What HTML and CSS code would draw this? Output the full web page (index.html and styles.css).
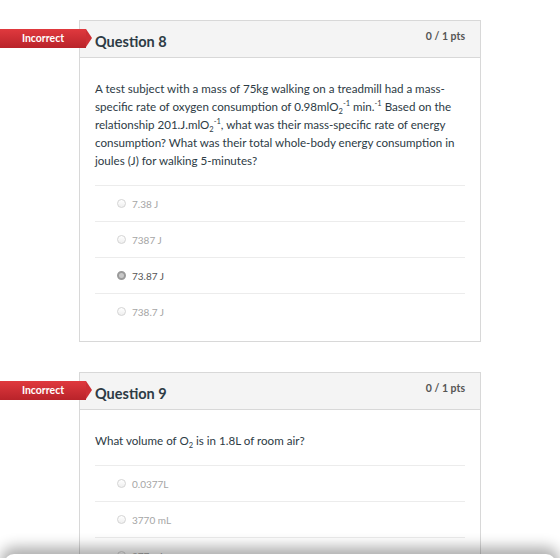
FILE: index.html
```html
<!DOCTYPE html>
<html>
<head>
    <title>Quiz Results</title>
    <link rel="stylesheet" href="styles.css">
</head>
<body>
    <div class="quiz">

        <div class="question">
            <div class="badge">Incorrect</div>
            <div class="question-header">
                <h2 class="question-title">Question 8</h2>
                <span class="points">0 / 1 pts</span>
            </div>
            <div class="question-body">
                <p class="question-text">A test subject with a mass of 75kg walking on a treadmill had a mass-specific rate of oxygen consumption of 0.98mlO<sub>2</sub><sup>-1</sup> min.<sup>-1</sup> Based on the relationship 201.J.mlO<sub>2</sub><sup>-1</sup>, what was their mass-specific rate of energy consumption? What was their total whole-body energy consumption in joules (J) for walking 5-minutes?</p>
                <div class="answers">
                    <div class="answer"><span class="radio"></span>7.38 J</div>
                    <div class="answer"><span class="radio"></span>7387 J</div>
                    <div class="answer selected"><span class="radio"></span>73.87 J</div>
                    <div class="answer"><span class="radio"></span>738.7 J</div>
                </div>
            </div>
        </div>

        <div class="question">
            <div class="badge">Incorrect</div>
            <div class="question-header">
                <h2 class="question-title">Question 9</h2>
                <span class="points">0 / 1 pts</span>
            </div>
            <div class="question-body">
                <p class="question-text">What volume of O<sub>2</sub> is in 1.8L of room air?</p>
                <div class="answers">
                    <div class="answer"><span class="radio"></span>0.0377L</div>
                    <div class="answer"><span class="radio"></span>3770 mL</div>
                    <div class="answer"><span class="radio"></span>377 mL</div>
                </div>
            </div>
        </div>

    </div>

    <!-- panel sliding in over the bottom of the page -->
    <div class="bottom-panel"></div>
</body>
</html>
```

FILE: styles.css
```css
body {
    background-color: #ffffff;
    font-family: Lato, "Open Sans", sans-serif;
    color: #2d3b45;
    margin: 0;
    padding: 0;
    overflow: hidden;
}

.quiz {
    padding-top: 20px;
}

.question {
    position: relative;
    box-sizing: border-box;
    width: 402px;
    margin-left: 79px;
    margin-bottom: 30px;
    border: 1px solid #d8d8d8;
    background-color: #ffffff;
}

.badge {
    position: absolute;
    left: -80px;
    top: 8px;
    width: 86px;
    height: 19px;
    line-height: 19px;
    font-size: 10.5px;
    font-weight: bold;
    color: #ffffff;
    text-align: center;
    background: linear-gradient(#e0393e, #b9232a);
}

.badge::after {
    content: "";
    position: absolute;
    right: -6px;
    top: 0;
    border-top: 9.5px solid transparent;
    border-bottom: 9.5px solid transparent;
    border-left: 6px solid #cd2f35;
}

.question-header {
    display: flex;
    justify-content: space-between;
    height: 36px;
    padding: 0 15px;
    background-color: #f4f4f4;
    border-bottom: 1px solid #d8d8d8;
}

.question-title {
    margin: 12px 0 0 0;
    font-size: 14.5px;
    font-weight: bold;
    color: #2d3b45;
}

.points {
    margin-top: 9px;
    font-size: 10.5px;
    font-weight: bold;
    color: #555555;
}

.question-body {
    padding: 22px 15px 12px 15px;
}

.question-text {
    margin: 0 0 15px 0;
    font-size: 11.6px;
    line-height: 18px;
}

.question-text sub,
.question-text sup {
    font-size: 7.5px;
    line-height: 0;
}

.answer {
    display: flex;
    align-items: center;
    height: 35px;
    padding-left: 22px;
    border-top: 1px solid #ececec;
    font-size: 10px;
    color: #a5a5a5;
}

.radio {
    box-sizing: border-box;
    width: 9px;
    height: 9px;
    margin-right: 6px;
    border: 1px solid #d4d4d4;
    border-radius: 50%;
    background: linear-gradient(#ffffff, #efefef);
}

.selected {
    color: #555555;
}

.selected .radio {
    border: 2px solid #9a9a9a;
    background: #c8c8c8;
}

.bottom-panel {
    position: fixed;
    left: 4px;
    right: 4px;
    top: 554px;
    height: 20px;
    background-color: #ffffff;
    border-radius: 10px 10px 0 0;
    box-shadow: 0 -4px 14px 3px rgba(0, 0, 0, 0.32);
}
```
